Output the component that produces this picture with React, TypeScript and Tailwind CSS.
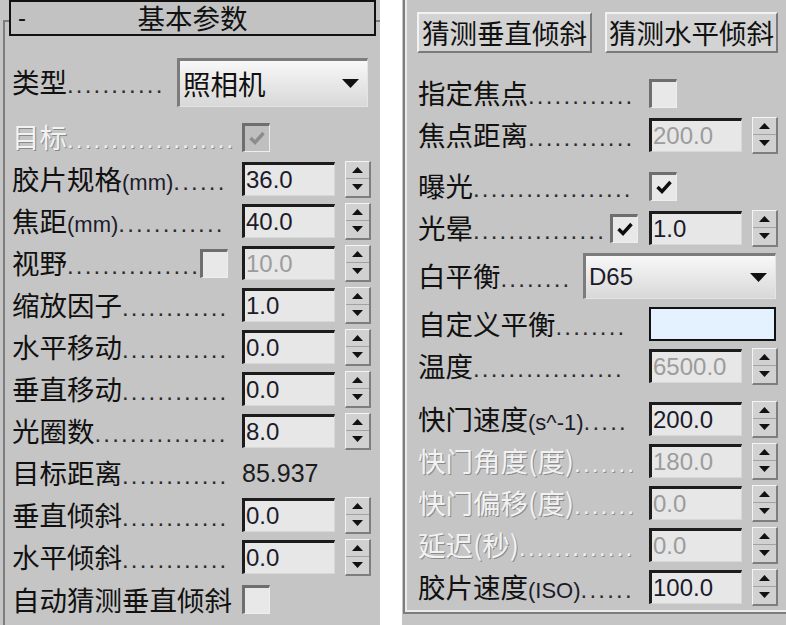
import React from "react"

const cjk = "font-['Noto_Sans_CJK_SC','Noto_Sans_CJK_JP',sans-serif]"
const lat = "font-['Liberation_Sans',Arial,sans-serif]"

// 标签 + 点线引导（点数按可用宽度给定）
function Label({
  children,
  n = 0,
  className = "w-[230px] pr-[10px]",
  disabled = false,
}: {
  children: React.ReactNode
  n?: number
  className?: string
  disabled?: boolean
}) {
  const tone = disabled
    ? "text-[#f2f2f2] [text-shadow:1px_1px_0_#8a8a8a]"
    : "text-[#111111]"
  return (
    <div className={`flex items-baseline shrink-0 ${className} ${tone}`}>
      <span className={`${cjk} text-[27.5px] leading-[1.2] whitespace-nowrap`}>{children}</span>
      {n > 0 && (
        <span
          className={`${lat} whitespace-nowrap text-[24px] leading-[1.2] tracking-[2.2px] ${
            disabled ? "" : "text-[#2a2a2a]"
          }`}
        >
          {".".repeat(n)}
        </span>
      )}
    </div>
  )
}

function Latin({ children }: { children: React.ReactNode }) {
  return <span className={`${lat} text-[22px] text-[#1c1c2c]`}>{children}</span>
}

function Check({ checked = false, disabled = false }: { checked?: boolean; disabled?: boolean }) {
  return (
    <div
      className={`w-[28px] h-[29px] shrink-0 flex items-center justify-center border-t-[3px] border-l-[3px] border-t-[#6e6e6e] border-l-[#6e6e6e] border-r border-b border-r-[#eeeeee] border-b-[#eeeeee] ${
        disabled ? "bg-[#bfbfbf]" : "bg-[#e8e8e8]"
      }`}
    >
      {checked && (
        <svg width="18" height="16" viewBox="0 0 18 16">
          <path
            d="M2.5 8 L7 12.5 L15.5 3"
            fill="none"
            stroke={disabled ? "#8c8c8c" : "#0d0d0d"}
            strokeWidth="3.4"
          />
        </svg>
      )}
    </div>
  )
}

function Field({ value, disabled = false }: { value: string; disabled?: boolean }) {
  return (
    <div
      className={`w-[93px] h-[34px] shrink-0 flex items-center pl-[1px] bg-[#e7e7e7] border-t-[3px] border-l-[3px] border-t-[#1c1c1c] border-l-[#1c1c1c] border-r border-b border-r-[#d8d8d8] border-b-[#d8d8d8] ${lat} text-[24px] leading-[1.15] ${
        disabled ? "text-[#9c9c9c]" : "text-[#1b1b2b]"
      }`}
    >
      {value}
    </div>
  )
}

function Spinner() {
  return (
    <div className="ml-[10px] w-[26px] h-[37px] shrink-0 flex flex-col bg-[#d1d1d1] border-t border-l border-t-[#f4f4f4] border-l-[#f4f4f4] border-r-2 border-b-2 border-r-[#7e7e7e] border-b-[#7e7e7e]">
      <div className="flex-1 flex items-center justify-center border-b border-b-[#a2a2a2]">
        <svg width="11" height="6" viewBox="0 0 11 6">
          <path d="M5.5 0 L11 6 L0 6 Z" fill="#111" />
        </svg>
      </div>
      <div className="flex-1 flex items-center justify-center">
        <svg width="11" height="6" viewBox="0 0 11 6">
          <path d="M0 0 L11 0 L5.5 6 Z" fill="#111" />
        </svg>
      </div>
    </div>
  )
}

function Spin({ value, disabled = false }: { value: string; disabled?: boolean }) {
  return (
    <>
      <Field value={value} disabled={disabled} />
      <Spinner />
    </>
  )
}

function Dropdown({ children, className }: { children: React.ReactNode; className: string }) {
  return (
    <div
      className={`${className} shrink-0 flex items-center justify-between pl-[3px] pr-[8px] border-t-[3px] border-l-[3px] border-t-[#7c7c7c] border-l-[#7c7c7c] border-r border-b border-r-[#e4e4e4] border-b-[#e4e4e4] bg-linear-to-b from-[#f8f8f8] to-[#d8d8d8]`}
    >
      {children}
      <svg width="17" height="9" viewBox="0 0 17 9">
        <path d="M0 0 H17 L8.5 9 Z" fill="#111" />
      </svg>
    </div>
  )
}

function Row({ children, className = "h-[42px]" }: { children: React.ReactNode; className?: string }) {
  return <div className={`flex items-center ${className}`}>{children}</div>
}

function Button({ children, className }: { children: React.ReactNode; className: string }) {
  return (
    <div
      className={`${className} h-[41px] flex items-center justify-center bg-[#d3d3d3] border-t-2 border-l-2 border-t-[#f2f2f2] border-l-[#f2f2f2] border-b-2 border-r-2 border-b-[#7a7a7a] border-r-[#7a7a7a] ${cjk} text-[27.5px] leading-[1.2] text-[#111111]`}
    >
      {children}
    </div>
  )
}

export default function App() {
  return (
    <div className="w-[786px] h-[625px] bg-white flex overflow-hidden">
      {/* 基本参数 卷展栏 */}
      <div className="w-[380px] h-full bg-[#c5c5c5] pt-[20px] pl-[3px]">
        <div className="h-full border-l-2 border-t-2 border-[#7d7d7d] flex flex-col">
          <div className="-mt-[22px] ml-[4px] w-[367px] h-[36px] shrink-0 border-2 border-[#111] bg-[#c2c2c2] grid grid-cols-[30px_1fr_30px] items-center">
            <span className={`${lat} text-[24px] leading-[1.2] pl-[7px] text-[#111]`}>-</span>
            <span className={`${cjk} text-[27.5px] leading-[1.15] text-center text-[#111]`}>基本参数</span>
            <span />
          </div>

          <div className="pl-[7px] flex flex-col">
            <Row className="mt-[20px] h-[52px]">
              <Label className="w-[165px] pr-[8px]" n={11}>
                类型
              </Label>
              <Dropdown className="w-[191px] h-[49px]">
                <span className={`${cjk} text-[27.5px] leading-[1.2] text-[#111]`}>照相机</span>
              </Dropdown>
            </Row>
            <Row className="mt-[8px] h-[42px]">
              <Label disabled n={19}>
                目标
              </Label>
              <Check checked disabled />
            </Row>
            <Row>
              <Label n={6}>
                胶片规格<Latin>(mm)</Latin>
              </Label>
              <Spin value="36.0" />
            </Row>
            <Row>
              <Label n={12}>
                焦距<Latin>(mm)</Latin>
              </Label>
              <Spin value="40.0" />
            </Row>
            <Row>
              <Label className="w-[188px] pr-[3px]" n={15}>
                视野
              </Label>
              <Check />
              <div className="w-[14px] shrink-0" />
              <Spin value="10.0" disabled />
            </Row>
            <Row>
              <Label n={12}>缩放因子</Label>
              <Spin value="1.0" />
            </Row>
            <Row>
              <Label n={12}>水平移动</Label>
              <Spin value="0.0" />
            </Row>
            <Row>
              <Label n={12}>垂直移动</Label>
              <Spin value="0.0" />
            </Row>
            <Row>
              <Label n={15}>光圈数</Label>
              <Spin value="8.0" />
            </Row>
            <Row>
              <Label n={12}>目标距离</Label>
              <span className={`${lat} text-[25px] leading-[1.2] text-[#1b1b1b]`}>85.937</span>
            </Row>
            <Row>
              <Label n={12}>垂直倾斜</Label>
              <Spin value="0.0" />
            </Row>
            <Row>
              <Label n={12}>水平倾斜</Label>
              <Spin value="0.0" />
            </Row>
            <Row>
              <Label>自动猜测垂直倾斜</Label>
              <Check />
            </Row>
          </div>
        </div>
      </div>

      {/* 续：照相机参数 */}
      <div className="ml-[22px] w-[384px] h-full bg-[#c5c5c5] pl-[1px]">
        <div className="h-[614px] border-l-2 border-b-2 border-[#7d7d7d]">
          <div className="h-full border-l-2 border-b-2 border-[#ebebeb] pl-[11px] flex flex-col">
            <div className="mt-[12px] -ml-[1px] flex gap-[13px]">
              <Button className="w-[175px]">猜测垂直倾斜</Button>
              <Button className="w-[173px]">猜测水平倾斜</Button>
            </div>

            <Row className="mt-[19px] h-[42px]">
              <Label className="w-[231px] pr-[12px]" n={12}>
                指定焦点
              </Label>
              <Check />
            </Row>
            <Row>
              <Label className="w-[231px] pr-[10px]" n={12}>
                焦点距离
              </Label>
              <Spin value="200.0" disabled />
            </Row>

            <Row className="mt-[9px] h-[42px]">
              <Label className="w-[231px] pr-[12px]" n={18}>
                曝光
              </Label>
              <Check checked />
            </Row>
            <Row>
              <Label className="w-[192px] pr-[3px]" n={15}>
                光晕
              </Label>
              <Check checked />
              <div className="w-[11px] shrink-0" />
              <Spin value="1.0" />
            </Row>
            <Row className="h-[54px]">
              <Label className="w-[165px] pr-[3px]" n={8}>
                白平衡{" "}
              </Label>
              <Dropdown className="w-[193px] h-[46px]">
                <span className={`${lat} text-[24px] leading-[1.2] text-[#1b1b2b]`}>D65</span>
              </Dropdown>
            </Row>
            <Row>
              <Label className="w-[231px] pr-[15px]" n={8}>
                自定义平衡{" "}
              </Label>
              <div className="w-[127px] h-[34px] shrink-0 border-2 border-[#111] bg-[#e4f2ff]" />
            </Row>
            <Row>
              <Label className="w-[231px] pr-[20px]" n={17}>
                温度
              </Label>
              <Spin value="6500.0" disabled />
            </Row>

            <Row className="mt-[11px] h-[42px]">
              <Label className="w-[231px] pr-[10px]" n={5}>
                快门速度<Latin>(s^-1)</Latin>
              </Label>
              <Spin value="200.0" />
            </Row>
            <Row>
              <Label className="w-[231px] pr-[10px]" disabled n={7}>
                快门角度(度)
              </Label>
              <Spin value="180.0" disabled />
            </Row>
            <Row>
              <Label className="w-[231px] pr-[10px]" disabled n={7}>
                快门偏移(度)
              </Label>
              <Spin value="0.0" disabled />
            </Row>
            <Row>
              <Label className="w-[231px] pr-[10px]" disabled n={13}>
                延迟(秒)
              </Label>
              <Spin value="0.0" disabled />
            </Row>
            <Row>
              <Label className="w-[231px] pr-[9px]" n={6}>
                胶片速度<Latin>(ISO)</Latin>
              </Label>
              <Spin value="100.0" />
            </Row>
          </div>
        </div>
      </div>
    </div>
  )
}
